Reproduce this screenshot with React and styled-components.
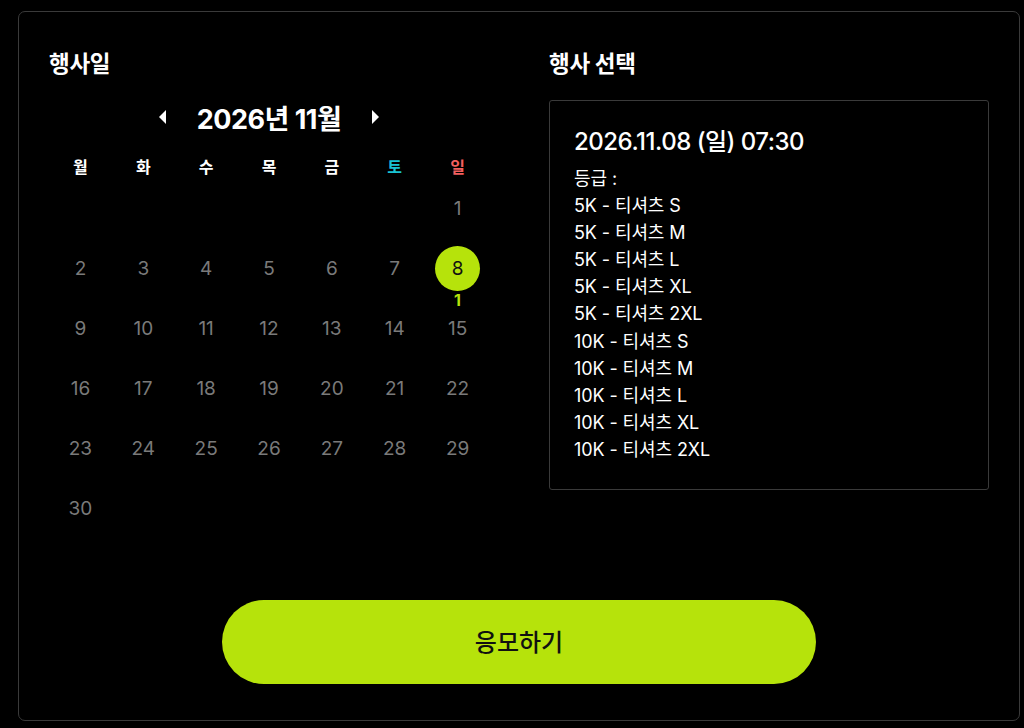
import React from "react";
import styled, { createGlobalStyle } from "styled-components";

const GlobalStyle = createGlobalStyle`
  * { box-sizing: border-box; }
  body {
    margin: 0;
    background: #000;
    font-family: Inter, "Noto Sans CJK KR", sans-serif;
    color: #fff;
  }
`;

const WEEKDAYS = [
  { label: "월" },
  { label: "화" },
  { label: "수" },
  { label: "목" },
  { label: "금" },
  { label: "토", tone: "sat" },
  { label: "일", tone: "sun" },
];

const GRADES = [
  "5K - 티셔츠 S",
  "5K - 티셔츠 M",
  "5K - 티셔츠 L",
  "5K - 티셔츠 XL",
  "5K - 티셔츠 2XL",
  "10K - 티셔츠 S",
  "10K - 티셔츠 M",
  "10K - 티셔츠 L",
  "10K - 티셔츠 XL",
  "10K - 티셔츠 2XL",
];

// Nov 2026 starts on Sunday -> 6 blanks in a Mon-first grid
const cells = [...Array(6).fill(null), ...Array.from({ length: 30 }, (_, i) => i + 1)];

function Arrow({ dir }) {
  return (
    <svg width="8" height="14" viewBox="0 0 8 14">
      {dir === "left" ? <path d="M7 0 L0 7 L7 14 Z" fill="#fff" /> : <path d="M1 0 L8 7 L1 14 Z" fill="#fff" />}
    </svg>
  );
}

function App() {
  return (
    <>
      <GlobalStyle />
      <Panel>
        <Columns>
          <Column>
            <Title>행사일</Title>
            <MonthBar>
              <ArrowButton>
                <Arrow dir="left" />
              </ArrowButton>
              <MonthLabel>2026년 11월</MonthLabel>
              <ArrowButton>
                <Arrow dir="right" />
              </ArrowButton>
            </MonthBar>
            <WeekRow>
              {WEEKDAYS.map((d) => (
                <WeekDay key={d.label} $tone={d.tone}>
                  {d.label}
                </WeekDay>
              ))}
            </WeekRow>
            <DayGrid>
              {cells.map((day, i) => (
                <DayCell key={i}>
                  {day && (
                    <>
                      <DayNumber $selected={day === 8}>{day}</DayNumber>
                      {day === 8 && <Count>1</Count>}
                    </>
                  )}
                </DayCell>
              ))}
            </DayGrid>
          </Column>
          <Column>
            <Title>행사 선택</Title>
            <EventBox>
              <EventDate>2026.11.08 (일) 07:30</EventDate>
              <GradeList>
                <li>등급 :</li>
                {GRADES.map((g) => (
                  <li key={g}>{g}</li>
                ))}
              </GradeList>
            </EventBox>
          </Column>
        </Columns>
        <Footer>
          <ApplyButton>응모하기</ApplyButton>
        </Footer>
      </Panel>
    </>
  );
}

export default App;

const Panel = styled.div`
  margin: 11px 0 0 18px;
  width: 1002px;
  height: 710px;
  border: 1px solid #3a3a3a;
  border-radius: 7px;
  padding: 37px 30px 36px 30px;
  display: flex;
  flex-direction: column;
`;

const Columns = styled.div`
  display: grid;
  grid-template-columns: 440px 440px;
  column-gap: 60px;
`;

const Column = styled.div`
  display: flex;
  flex-direction: column;
`;

const Title = styled.h2`
  margin: 0;
  font-size: 22.5px;
  line-height: 30px;
  font-weight: 700;
  letter-spacing: -0.3px;
`;

const MonthBar = styled.div`
  margin-top: 20px;
  height: 36px;
  display: flex;
  align-items: center;
  justify-content: center;
  column-gap: 26px;
`;

const ArrowButton = styled.button`
  background: none;
  border: none;
  padding: 4px;
  display: flex;
  align-items: center;
  cursor: pointer;
`;

const MonthLabel = styled.div`
  font-size: 27px;
  font-weight: 700;
  letter-spacing: -0.5px;
`;

const WeekRow = styled.div`
  margin-top: 22px;
  display: grid;
  grid-template-columns: repeat(7, 1fr);
`;

const WeekDay = styled.div`
  text-align: center;
  font-size: 16px;
  line-height: 20px;
  font-weight: 700;
  color: ${({ $tone }) => ($tone === "sat" ? "#19c3d3" : $tone === "sun" ? "#f25f5f" : "#fff")};
`;

const DayGrid = styled.div`
  margin-top: 1px;
  display: grid;
  grid-template-columns: repeat(7, 1fr);
  grid-auto-rows: 60px;
`;

const DayCell = styled.div`
  position: relative;
  display: flex;
  justify-content: center;
  align-items: center;
`;

const DayNumber = styled.div`
  width: 45px;
  height: 45px;
  border-radius: 50%;
  display: flex;
  align-items: center;
  justify-content: center;
  font-size: 19px;
  color: ${({ $selected }) => ($selected ? "#111" : "#7a7a7a")};
  background: ${({ $selected }) => ($selected ? "#b6e30b" : "transparent")};
`;

const Count = styled.span`
  position: absolute;
  left: 0;
  right: 0;
  top: calc(50% + 24px);
  line-height: 16px;
  text-align: center;
  font-size: 16px;
  font-weight: 700;
  color: #b6e30b;
`;

const EventBox = styled.div`
  margin-top: 21px;
  height: 390px;
  border: 1px solid #3a3a3a;
  border-radius: 3px;
  padding: 25px 24px;
`;

const EventDate = styled.div`
  font-size: 24px;
  line-height: 32px;
  font-weight: 500;
  letter-spacing: -0.5px;
`;

const GradeList = styled.ul`
  margin: 7px 0 0;
  padding: 0;
  list-style: none;

  li {
    font-size: 18px;
    line-height: 27.1px;
    letter-spacing: -0.1px;
  }
`;

const Footer = styled.div`
  margin-top: auto;
  display: flex;
  justify-content: center;
`;

const ApplyButton = styled.button`
  width: 594px;
  height: 84px;
  padding: 0 0 4px;
  border: none;
  border-radius: 42px;
  background: #b6e30b;
  color: #111;
  font-family: Inter, "Noto Sans CJK KR", sans-serif;
  font-size: 24px;
  font-weight: 500;
  cursor: pointer;
`;
